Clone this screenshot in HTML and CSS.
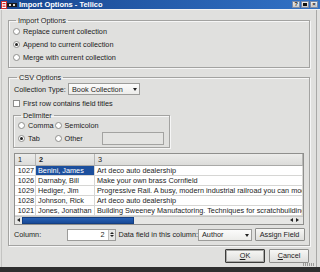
FILE: index.html
```html
<!DOCTYPE html>
<html lang="en">
  <head>
    <meta charset="UTF-8" />
    <meta name="viewport" content="width=device-width, initial-scale=1.0" />
    <title>Import Options - Tellico</title>

    <link rel="stylesheet" href="styles.css">
  </head>
  <body>
    <div class="window">
      <div class="titlebar">
        <div class="app-icon">
          <svg width="17" height="8" viewBox="0 0 17 8">
            <rect x="0.5" y="0.5" width="5" height="7" fill="#fff" stroke="#c33" />
            <rect x="1.5" y="2" width="3" height="1.2" fill="#d22" />
            <rect x="1.5" y="4.6" width="3" height="1.2" fill="#d22" />
            <rect x="6" y="2" width="10" height="4" fill="#1a1a1a" />
            <rect x="8" y="3" width="2" height="2" fill="#ddd" />
            <rect x="12" y="3" width="2" height="2" fill="#ddd" />
          </svg>
        </div>
        <div class="title">Import Options - Tellico</div>
        <div class="tb-buttons">
          <div class="tb-btn">?</div>
          <div class="tb-btn"><span class="max-box"></span></div>
          <div class="tb-btn">×</div>
        </div>
      </div>

      <div class="dialog">
        <fieldset class="group import">
          <legend>Import Options</legend>
          <div class="opt"><span class="radio"></span>Replace current collection</div>
          <div class="opt"><span class="radio on"></span>Append to current collection</div>
          <div class="opt"><span class="radio"></span>Merge with current collection</div>
        </fieldset>

        <fieldset class="group csv">
          <legend>CSV Options</legend>
          <div class="line">
            <span class="type-label">Collection Type:</span>
            <div class="combo type-combo">Book Collection<span class="down"></span></div>
          </div>
          <div class="line"><span class="check"></span>First row contains field titles</div>

          <fieldset class="group delim">
            <legend>Delimiter</legend>
            <div class="delim-grid">
              <div class="opt-sm"><span class="radio"></span>Comma</div>
              <div class="opt-sm"><span class="radio"></span>Semicolon</div>
              <div></div>
              <div class="opt-sm"><span class="radio on"></span>Tab</div>
              <div class="opt-sm"><span class="radio"></span>Other</div>
              <div class="other-field"></div>
            </div>
          </fieldset>

          <div class="table">
            <div class="cells">
              <div class="hd num-hd">1</div>
              <div class="hd cur">2</div>
              <div class="hd">3</div>

              <div class="num">1027</div>
              <div class="sel">Benini, James</div>
              <div>Art deco auto dealership</div>

              <div class="num">1026</div>
              <div>Darnaby, Bill</div>
              <div>Make your own brass Cornfield</div>

              <div class="num">1029</div>
              <div>Hediger, Jim</div>
              <div>Progressive Rail. A busy, modern industrial railroad you can model</div>

              <div class="num">1028</div>
              <div>Johnson, Rick</div>
              <div>Art deco auto dealership</div>

              <div class="num">1021</div>
              <div>Jones, Jonathan</div>
              <div>Building Sweeney Manufactoring. Techniques for scratchbuilding</div>
            </div>
            <div class="hscroll">
              <div class="sb-btn"><span class="left"></span></div>
              <div class="thumb"></div>
              <div class="sb-space"></div>
              <div class="sb-btn"><span class="left"></span></div>
              <div class="sb-btn"><span class="right"></span></div>
            </div>
          </div>

          <div class="line field-line">
            <span class="col-label">Column:</span>
            <div class="spin">
              <span class="spin-val">2</span>
              <span class="spin-btns"><span class="up"></span><span class="dn"></span></span>
            </div>
            <span class="data-label">Data field in this column:</span>
            <div class="combo author-combo">Author<span class="down"></span></div>
            <div class="button assign">Assign Field</div>
          </div>
        </fieldset>

        <div class="actions">
          <div class="button ok"><u>O</u>K</div>
          <div class="button"><u>C</u>ancel</div>
        </div>
        <div class="grip"></div>
      </div>
    </div>
  </body>
</html>
```

FILE: styles.css
```css
* {
  box-sizing: border-box;
}

html,
body {
  margin: 0;
  padding: 0;
}

body {
  width: 320px;
  height: 272px;
  overflow: hidden;
  background-color: #2f2f2f;
  font-family: "Liberation Sans", Arial, sans-serif;
  font-size: 7.3px;
  color: #1c1c1c;
}

.window {
  width: 320px;
  height: 267px;
  background-color: #e0e0de;
  display: flex;
  flex-direction: column;
}

/* title bar */
.titlebar {
  height: 10px;
  display: flex;
  align-items: center;
  background: linear-gradient(to right, #18468f, #3272c6);
  border-bottom: 1px solid #f2f2f2;
  color: #fff;
}

.app-icon {
  width: 19px;
  height: 9px;
  padding-left: 1px;
  display: flex;
  align-items: center;
}

.title {
  flex: 1;
  font-weight: bold;
  font-size: 7.5px;
  line-height: 9px;
}

.tb-buttons {
  display: flex;
  gap: 1px;
  padding-right: 2px;
}

.tb-btn {
  width: 8px;
  height: 7px;
  background: linear-gradient(#f0f0f0, #c8c8c8);
  border: 1px solid #7b8aa6;
  color: #111;
  font-size: 6px;
  font-weight: bold;
  line-height: 5px;
  text-align: center;
  display: flex;
  align-items: center;
  justify-content: center;
}

.max-box {
  width: 4px;
  height: 3px;
  border: 1px solid #111;
  border-top-width: 2px;
}

/* dialog body */
.dialog {
  flex: 1;
  padding: 6px 8px 0 7px;
  border-left: 1px solid #c4c4c2;
  border-right: 1px solid #a9a9a7;
  margin: 0 3px 0 1px;
  display: flex;
  flex-direction: column;
  position: relative;
}

.group {
  margin: 0;
  border: 1px solid #a3a3a1;
  box-shadow: 1px 1px 0 #f6f6f6, inset 1px 1px 0 #f6f6f6;
  min-inline-size: 0;
}

.group legend {
  padding: 0 2px;
  margin-left: 3px;
  line-height: 9px;
}

.import {
  padding: 0 4px 3px 4px;
  margin-right: -2px;
  margin-left: -1px;
}

.opt {
  height: 13px;
  display: flex;
  align-items: center;
}

.radio {
  width: 7px;
  height: 7px;
  border-radius: 50%;
  border: 1px solid #8e8e8c;
  background-color: #fff;
  margin-right: 3px;
  display: flex;
  align-items: center;
  justify-content: center;
  flex-shrink: 0;
}

.radio.on::after {
  content: "";
  width: 3px;
  height: 3px;
  border-radius: 50%;
  background-color: #222;
}

.csv {
  margin-top: 4.5px;
  margin-right: -2px;
  margin-left: -1px;
  padding: 1px 5px 3px 5px;
}

.line {
  height: 13px;
  display: flex;
  align-items: center;
  margin-bottom: 1px;
  white-space: nowrap;
}

.type-label {
  width: 54px;
}

.combo {
  height: 12px;
  border: 1px solid #9c9c9a;
  background: linear-gradient(#fbfbfb, #ececea);
  display: flex;
  align-items: center;
  padding-left: 3px;
  position: relative;
  flex-shrink: 0;
}

.type-combo {
  width: 72px;
}

.down {
  position: absolute;
  right: 2px;
  top: 4px;
  width: 0;
  height: 0;
  border-left: 2px solid transparent;
  border-right: 2px solid transparent;
  border-top: 3px solid #222;
}

.check {
  width: 7px;
  height: 7px;
  border: 1px solid #8e8e8c;
  background-color: #fff;
  margin: 0 3px 0 -1px;
}

.delim {
  width: 157px;
  margin-left: -1px;
  padding: 0 4px 2px 4px;
}

.delim-grid {
  display: grid;
  grid-template-columns: 36.5px 47px 62px;
  grid-auto-rows: 12.5px;
  align-items: center;
}

.opt-sm {
  display: flex;
  align-items: center;
}

.other-field {
  height: 12.5px;
  border: 1px solid #a3a3a1;
  background-color: #e4e4e2;
}

/* data table */
.table {
  margin-top: 5px;
  border: 1px solid #8f8f8d;
  background-color: #fff;
  overflow: hidden;
}

.cells {
  display: grid;
  grid-template-columns: 21px 59px 1fr;
  grid-template-rows: 12px;
  grid-auto-rows: 10px;
  white-space: nowrap;
  overflow: hidden;
}

.cells > div {
  border-right: 1px solid #d6d6d4;
  border-bottom: 1px solid #d6d6d4;
  padding: 0 2px;
  line-height: 9px;
  overflow: hidden;
}

.cells > .hd {
  height: 12px;
  line-height: 11px;
  background: linear-gradient(#ececea, #dcdcda);
  border-right: 1px solid #b6b6b4;
  border-bottom: 1px solid #a9a9a7;
  padding-left: 3px;
}

.cells > .cur {
  font-weight: bold;
}

.cells > .num {
  text-align: right;
  padding-right: 1px;
}

.cells > .sel {
  background-color: #1c4f9d;
  color: #fff;
}

.hscroll {
  height: 8px;
  display: flex;
  background-color: #e6e6e4;
  border-top: 1px solid #c8c8c6;
}

.sb-btn {
  width: 6px;
  display: flex;
  align-items: center;
  justify-content: center;
}

.sb-btn:first-child {
  width: 7px;
}

.thumb {
  width: 112px;
  background: linear-gradient(#2760b3, #184a98);
  border: 1px solid #133e82;
}

.sb-space {
  flex: 1;
}

.hscroll .sb-btn:last-child {
  margin-right: 3px;
}

.left,
.right {
  width: 0;
  height: 0;
  border-top: 2px solid transparent;
  border-bottom: 2px solid transparent;
}

.left {
  border-right: 3px solid #222;
}

.right {
  border-left: 3px solid #222;
}

/* field assignment row */
.field-line {
  height: 14px;
  margin: 3px 0 0 0;
}

.col-label {
  width: 52.5px;
  flex-shrink: 0;
}

.spin {
  width: 49px;
  height: 12px;
  border: 1px solid #9c9c9a;
  background-color: #fff;
  display: flex;
  align-items: center;
  flex-shrink: 0;
}

.spin-val {
  flex: 1;
  text-align: right;
  padding-right: 3px;
}

.spin-btns {
  width: 7px;
  height: 10px;
  background-color: #e8e8e6;
  border-left: 1px solid #c0c0be;
  display: flex;
  flex-direction: column;
  align-items: center;
  justify-content: center;
  gap: 1px;
}

.up,
.dn {
  width: 0;
  height: 0;
  border-left: 2px solid transparent;
  border-right: 2px solid transparent;
}

.up {
  border-bottom: 2px solid #222;
}

.dn {
  border-top: 2px solid #222;
}

.data-label {
  margin-left: 3px;
  flex: 1;
}

.author-combo {
  width: 54px;
}

.button {
  height: 13px;
  border: 1px solid #8f8f8d;
  border-radius: 1px;
  background: linear-gradient(#f7f7f5, #dededc);
  display: flex;
  align-items: center;
  justify-content: center;
  flex-shrink: 0;
}

.assign {
  width: 50px;
  margin-left: 2.5px;
}

.actions {
  display: flex;
  justify-content: flex-end;
  gap: 4px;
  margin-top: 3px;
  margin-right: -1px;
}

.actions .button {
  width: 40px;
  height: 14px;
}

.actions .ok {
  border: 1px solid #3c3c3a;
  box-shadow: inset 0 0 0 1px #a8a8a6;
}

.grip {
  position: absolute;
  right: 1px;
  bottom: 1px;
  width: 12px;
  height: 3px;
  background: repeating-linear-gradient(to right, #9a9a98 0 1px, transparent 1px 2px);
}
```
